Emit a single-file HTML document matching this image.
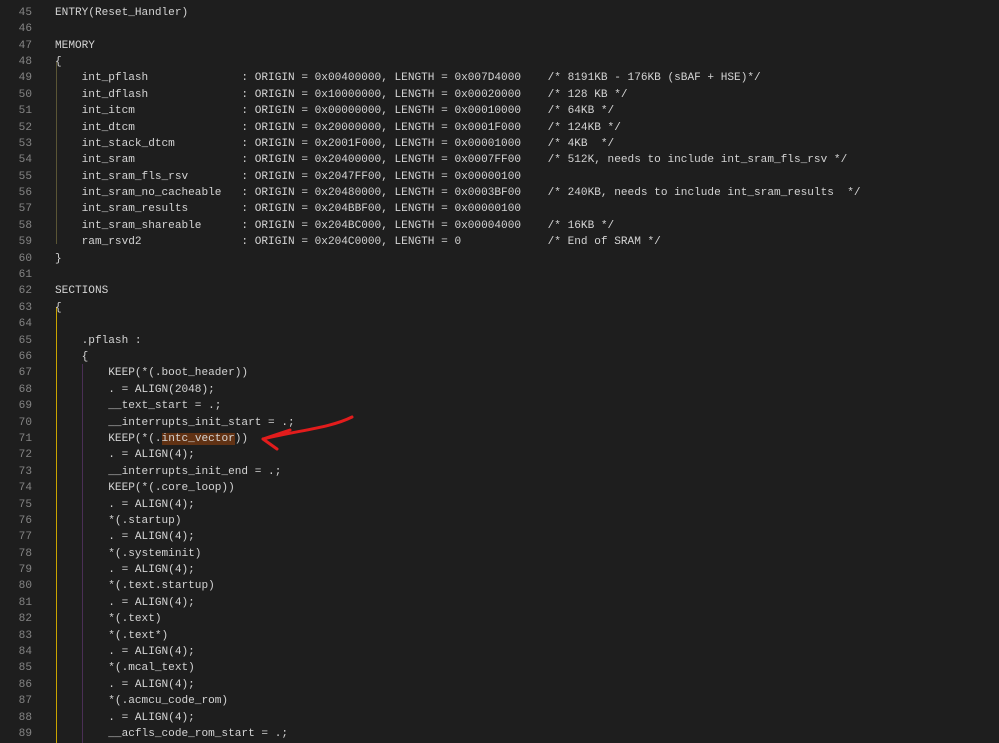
<!DOCTYPE html><html><head><style>
body{margin:0;width:999px;height:743px;background:#1e1e1e;overflow:hidden;position:relative;font-family:"Liberation Mono",monospace;font-size:11.1px;color:#d4d4d4}
.l{position:absolute;left:0;height:16.39px;line-height:16.39px;white-space:pre;width:999px}
.n{position:absolute;right:967px;color:#858585;text-align:right}
.t{position:absolute;left:55px}
.g{position:absolute;width:1px}
.h{background:#613214}
</style></head><body>
<div class="g" style="left:56px;top:62px;height:182px;background:#5a5535"></div>
<div class="g" style="left:56px;top:307px;height:436px;background:#c9a400"></div>
<div class="g" style="left:82px;top:364px;height:379px;background:#4a2f55"></div>
<div id="c"></div>
<script>
const L=["ENTRY(Reset_Handler)","","MEMORY","{",
"    int_pflash              : ORIGIN = 0x00400000, LENGTH = 0x007D4000    /* 8191KB - 176KB (sBAF + HSE)*/",
"    int_dflash              : ORIGIN = 0x10000000, LENGTH = 0x00020000    /* 128 KB */",
"    int_itcm                : ORIGIN = 0x00000000, LENGTH = 0x00010000    /* 64KB */",
"    int_dtcm                : ORIGIN = 0x20000000, LENGTH = 0x0001F000    /* 124KB */",
"    int_stack_dtcm          : ORIGIN = 0x2001F000, LENGTH = 0x00001000    /* 4KB  */",
"    int_sram                : ORIGIN = 0x20400000, LENGTH = 0x0007FF00    /* 512K, needs to include int_sram_fls_rsv */",
"    int_sram_fls_rsv        : ORIGIN = 0x2047FF00, LENGTH = 0x00000100",
"    int_sram_no_cacheable   : ORIGIN = 0x20480000, LENGTH = 0x0003BF00    /* 240KB, needs to include int_sram_results  */",
"    int_sram_results        : ORIGIN = 0x204BBF00, LENGTH = 0x00000100",
"    int_sram_shareable      : ORIGIN = 0x204BC000, LENGTH = 0x00004000    /* 16KB */",
"    ram_rsvd2               : ORIGIN = 0x204C0000, LENGTH = 0             /* End of SRAM */",
"}","","SECTIONS","{","","    .pflash :","    {",
"        KEEP(*(.boot_header))","        . = ALIGN(2048);","        __text_start = .;","        __interrupts_init_start = .;",
"        KEEP(*(.@@intc_vector##))","        . = ALIGN(4);","        __interrupts_init_end = .;","        KEEP(*(.core_loop))",
"        . = ALIGN(4);","        *(.startup)","        . = ALIGN(4);","        *(.systeminit)","        . = ALIGN(4);",
"        *(.text.startup)","        . = ALIGN(4);","        *(.text)","        *(.text*)","        . = ALIGN(4);",
"        *(.mcal_text)","        . = ALIGN(4);","        *(.acmcu_code_rom)","        . = ALIGN(4);","        __acfls_code_rom_start = .;"];
let h='<div class="l" style="top:-11.6px"><span class="n">44</span></div>';
L.forEach((s,i)=>{let e=s.replace(/&/g,'&amp;').replace(/</g,'&lt;').replace('@@','<span class="h">').replace('##','</span>');
h+=`<div class="l" style="top:${4.8+i*16.39}px"><span class="n">${45+i}</span><span class="t">${e}</span></div>`;});
document.getElementById('c').innerHTML=h;
</script>
<svg style="position:absolute;left:0;top:0" width="999" height="743"><path d="M352 417 C330 428 300 430 263 439 M263 439 L290 430 M263 439 L277 449" fill="none" stroke="#e21c1c" stroke-width="3" stroke-linecap="round" stroke-linejoin="round"/></svg>
</body></html>
